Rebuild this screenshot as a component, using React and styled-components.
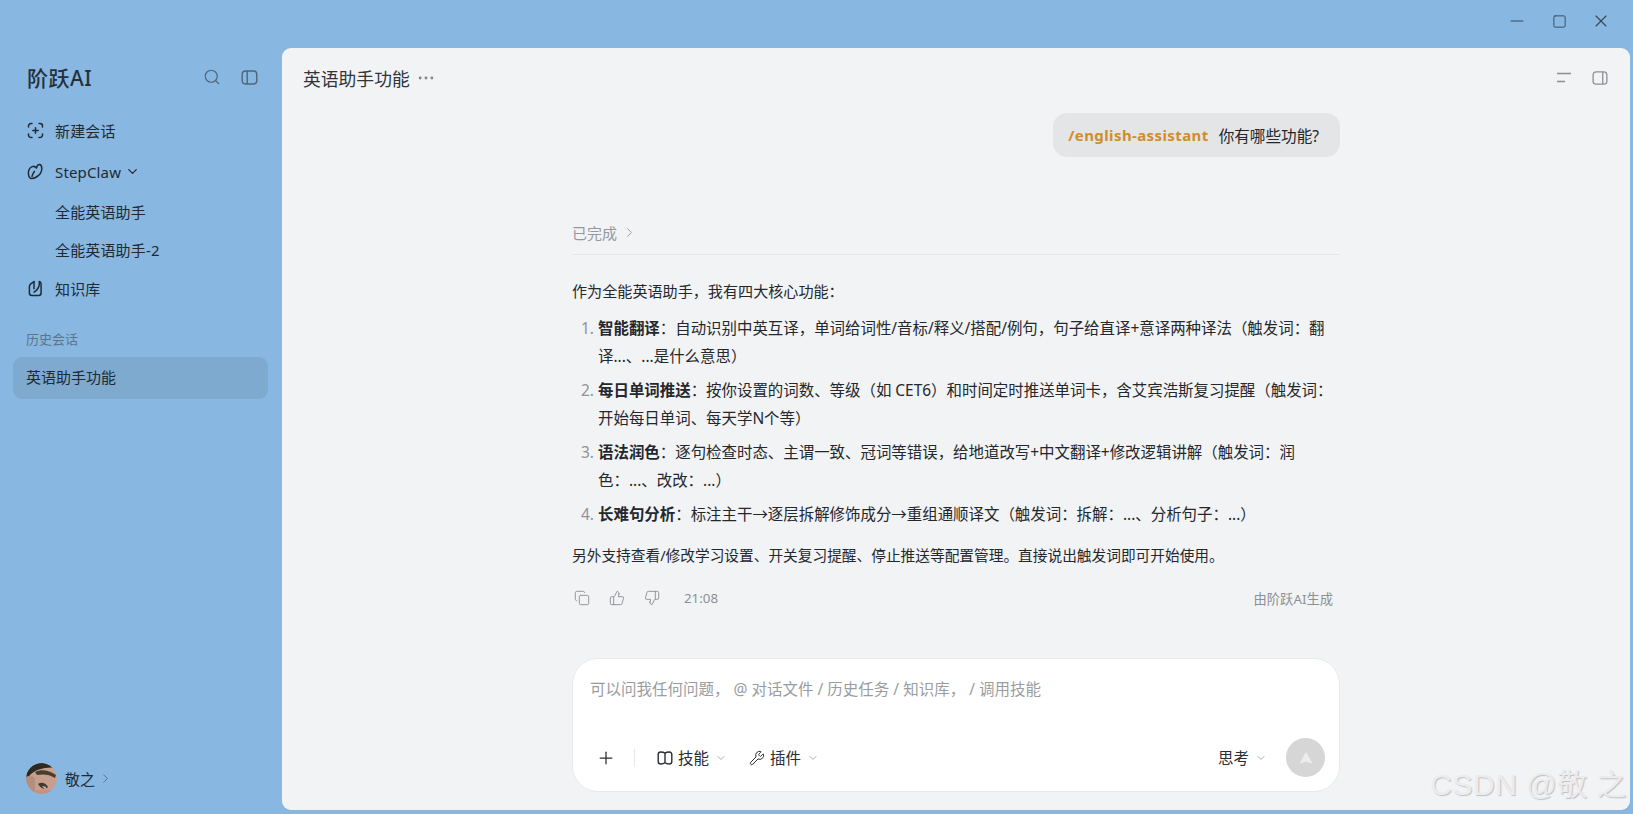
import React from "react";
import styled, { createGlobalStyle } from "styled-components";
import { Search, Plus, ChevronDown, ChevronRight, Minus, Square, X, Copy, ThumbsUp, ThumbsDown, Wrench, Ellipsis } from "lucide-react";

const GlobalStyle = createGlobalStyle`
  html, body {
    margin: 0;
    height: 100%;
    overflow: hidden;
  }
  body {
    font-family: "Noto Sans", "Noto Sans CJK SC", sans-serif;
    color: #1f2329;
  }
  * {
    box-sizing: border-box;
  }
`;

const PanelIcon = ({ right, size = 17 }) => (
  <svg width={size} height={size} viewBox="0 0 17 17" fill="none" stroke="currentColor" strokeWidth="1.4">
    <rect x="1.2" y="2" width="14.6" height="13" rx="3.4" />
    <path d={right ? "M11.4 2v13" : "M6.2 2v13"} />
  </svg>
);

const NewChatIcon = () => (
  <svg width="17" height="17" viewBox="0 0 17 17" fill="none" stroke="currentColor" strokeWidth="1.5" strokeLinecap="round">
    <path d="M1.5 5V4a2.5 2.5 0 0 1 2.5-2.5h1M12 1.5h1A2.5 2.5 0 0 1 15.5 4v1M15.5 12v1a2.5 2.5 0 0 1-2.5 2.5h-1M5 15.5H4A2.5 2.5 0 0 1 1.5 13v-1" />
    <path d="M8.5 5.8v5.4M5.8 8.5h5.4" />
  </svg>
);

const ClawIcon = () => (
  <svg width="17" height="17" viewBox="0 0 17 17" fill="none" stroke="currentColor" strokeWidth="1.5" strokeLinecap="round" strokeLinejoin="round">
    <path d="M6.8 3.2C3.8 3.6 1.4 6.2 1.4 9.6c0 2.8.8 5.4 2.4 5.8 1.6.4 3.6-.2 5.6-1.400 3-1.800 5.400-4.800 5.400-8.200 0-2.400-.8-4-2-4.200-1.400-.2-2.800 1.200-3.400 3.400-.6-.8-1.400-1.400-2.600-1.800z" />
    <path d="M7.4 8.400c-1.200 1.400-2 3-2.400 5" />
  </svg>
);

const BaseIcon = () => (
  <svg width="17" height="17" viewBox="0 0 17 17" fill="none" stroke="currentColor" strokeWidth="1.5" strokeLinecap="round" strokeLinejoin="round">
    <path d="M7 1.600 3.800 3.900c-1 .7-1.400 1.500-1.400 2.600v6.400c0 1.500 1 2.500 2.500 2.500h6.700c1.500 0 2.500-1 2.500-2.500V4.200c0-1.400-.7-2.400-1.800-2.600" />
    <path d="M7 1.600v7.200M12.400 1.800c.3 3.400-.2 7.200-5.400 10.400" />
  </svg>
);

const BookIcon = () => (
  <svg width="16" height="16" viewBox="0 0 16 16" fill="none" stroke="currentColor" strokeWidth="1.4">
    <path d="M8 3.200C6.800 2.200 5.400 2 3.600 2 2.200 2 1.200 3 1.200 4.400v7.200c0 1.400 1 2.400 2.400 2.400 1.800 0 3.200-.2 4.400-1.200 1.200 1 2.600 1.200 4.400 1.200 1.400 0 2.400-1 2.400-2.400V4.400C14.800 3 13.800 2 12.400 2 10.600 2 9.200 2.200 8 3.200z" />
    <path d="M8 3.200v9.600" />
  </svg>
);

const FoldIcon = () => (
  <svg width="16" height="16" viewBox="0 0 16 16" fill="none" stroke="currentColor" strokeWidth="1.5">
    <path d="M1 3.500h14M1 11.500h8" />
  </svg>
);

const SendIcon = () => (
  <svg width="16" height="16" viewBox="0 0 16 16" fill="#ececec" stroke="#ececec" strokeWidth="1.2" strokeLinejoin="round">
    <path d="M8 3 13.500 13 8 11 2.500 13z" />
  </svg>
);

const Avatar = () => (
  <svg width="31" height="31" viewBox="0 0 31 31">
    <defs>
      <clipPath id="avatar-clip">
        <circle cx="15.5" cy="15.5" r="15.5" />
      </clipPath>
      <filter id="avatar-blur">
        <feGaussianBlur stdDeviation="0.7" />
      </filter>
    </defs>
    <g clipPath="url(#avatar-clip)">
      <rect width="31" height="31" fill="#c6a08c" />
      <g filter="url(#avatar-blur)">
        <path d="M-1-1h33v6C22 3 9 6 4 12L-1 18z" fill="#2f2a24" />
        <path d="M9 9c6-3 14-2 21 3l-1 3c-6-4-12-4-18-3z" fill="#4a3c33" />
        <path d="M0 14c3-2 6-1 9 1v15H0z" fill="#b58f7d" />
        <path d="M12 21c3-2 7-2 10 3-3 3-7 2-10-3z" fill="#3f3733" />
        <path d="M16 23l4 1-1 2z" fill="#dcd6d0" />
        <path d="M8 27h23v5H8z" fill="#c9907e" />
      </g>
    </g>
  </svg>
);

const Window = styled.div`
  position: relative;
  display: flex;
  width: 100%;
  height: 100vh;
  background: #88b8e2;
`;

const Sidebar = styled.aside`
  flex: 0 0 282px;
  display: flex;
  flex-direction: column;
  padding-top: 48px;
`;

const Brand = styled.div`
  display: flex;
  align-items: center;
  height: 58px;
  padding: 0 24px 0 27px;
`;

const Logo = styled.div`
  flex: 1;
  font-size: 21px;
  font-weight: 500;
  letter-spacing: 0.5px;
  color: #26303a;
`;

const BrandButton = styled.span`
  display: flex;
  margin-left: 20px;
  color: #4d6578;
`;

const NavList = styled.nav`
  display: flex;
  flex-direction: column;
  margin-top: 3px;
`;

const NavItem = styled.div`
  display: flex;
  align-items: center;
  gap: 11px;
  height: ${(p) => (p.$sub ? "38px" : "41px")};
  padding-left: ${(p) => (p.$sub ? "55px" : "27px")};
  font-size: 15px;
  letter-spacing: 0.15px;
  color: #1f2a33;

  &:first-child {
    height: 42px;
  }
`;

const NavCaret = styled.span`
  display: flex;
  margin-left: -7px;
`;

const SectionLabel = styled.div`
  margin-top: 20px;
  padding-left: 26px;
  font-size: 13px;
  color: #5d7488;
`;

const HistoryItem = styled.div`
  display: flex;
  align-items: center;
  height: 42px;
  margin: 9px 14px 0 13px;
  padding: 0 0 3px 13px;
  border-radius: 9px;
  background: #7eaad0;
  font-size: 15px;
  color: #1f2a33;
`;

const UserRow = styled.div`
  display: flex;
  align-items: center;
  gap: 8px;
  margin-top: auto;
  margin-bottom: 20px;
  padding-left: 26px;
  font-size: 15px;
  color: #1f2a33;

  svg {
    border-radius: 50%;
  }
`;

const UserCaret = styled.span`
  display: flex;
  margin-left: -5px;
  color: #56718a;
`;

const Main = styled.main`
  flex: 1;
  display: flex;
  flex-direction: column;
  margin: 48px 3px 4px 0;
  border-radius: 9px;
  background: #f2f3f5;
  overflow: hidden;
`;

const Header = styled.header`
  display: flex;
  align-items: center;
  height: 60px;
  padding: 0 22px 0 21px;
`;

const Title = styled.h1`
  margin: 0;
  font-size: 17.8px;
  font-weight: 400;
  color: #30353b;
`;

const Dots = styled.span`
  display: flex;
  margin-left: 6px;
  color: #7f8388;
`;

const HeaderActions = styled.div`
  display: flex;
  align-items: center;
  gap: 20px;
  margin-left: auto;
  color: #8b8f94;
`;

const Column = styled.div`
  width: 768px;
  margin-left: 290px;
  display: flex;
  flex-direction: column;
`;

const UserBubble = styled.div`
  align-self: flex-end;
  display: flex;
  align-items: center;
  height: 44px;
  margin-top: 5px;
  padding: 0 21px 0 15px;
  border-radius: 14px;
  background: #e4e5e7;
  font-size: 15.6px;
  color: #23272c;
`;

const Command = styled.span`
  margin-right: 10px;
  font-size: 15px;
  font-weight: 700;
  letter-spacing: 0.4px;
  color: #cf8e2b;
`;

const Status = styled.div`
  display: flex;
  align-items: center;
  gap: 5px;
  height: 45px;
  margin-top: 53px;
  border-bottom: 1px solid #e6e7ea;
  font-size: 15px;
  color: #94989d;
`;

const Answer = styled.div`
  margin-top: 22px;
  font-size: 15px;
  line-height: 28px;
  color: #24282d;
`;

const Para = styled.p`
  margin: 0;
  font-size: ${(p) => (p.$tight ? "14.7px" : "15.1px")};
`;

const Steps = styled.ol`
  margin: 9px 0 13px;
  padding: 0 0 0 26px;
  font-size: 15.45px;

  li {
    margin-bottom: 6px;
    white-space: pre-line;
  }
  li::marker {
    color: #8f9398;
  }
  strong {
    font-weight: 700;
  }
`;

const MetaRow = styled.div`
  display: flex;
  align-items: center;
  height: 30px;
  margin-top: 14px;
  padding: 0 7px 0 2px;
  font-size: 13.3px;
  color: #8c9095;
`;

const MetaIcon = styled.span`
  display: flex;
  margin-right: 19px;
`;

const MetaTime = styled.span`
  margin-left: 5px;
`;

const MetaNote = styled.span`
  margin-left: auto;
`;

const Composer = styled.div`
  display: flex;
  flex-direction: column;
  height: 134px;
  margin-top: 45px;
  padding: 0 14px 0 23px;
  border: 1px solid #e9eaec;
  border-radius: 26px;
  background: #fff;
`;

const Placeholder = styled.div`
  margin: 20px 0 0 -6px;
  font-size: 15.5px;
  line-height: 20px;
  color: #999da1;
`;

const ComposerBar = styled.div`
  display: flex;
  align-items: center;
  margin-top: auto;
  margin-bottom: 14px;
  font-size: 15.5px;
  color: #2a2e33;
`;

const Divider = styled.span`
  width: 1px;
  height: 18px;
  margin: 0 22px 0 18px;
  background: #e8e8e8;
`;

const ToolButton = styled.span`
  display: flex;
  align-items: center;
  gap: 5px;
  margin-right: ${(p) => (p.$end ? "17px" : "22px")};
`;

const Caret = styled.span`
  display: flex;
  margin-left: 1px;
  color: #8d9094;
`;

const SendButton = styled.span`
  display: flex;
  align-items: center;
  justify-content: center;
  width: 39px;
  height: 39px;
  margin-left: 2px;
  border-radius: 50%;
  background: #d6d6d6;
`;

const Spacer = styled.span`
  flex: 1;
`;

const TitleBar = styled.div`
  position: absolute;
  top: 0;
  right: 0;
  display: flex;
  align-items: center;
  height: 42px;
  padding-right: 11px;
  color: #36475a;
`;

const WinButton = styled.span`
  display: flex;
  justify-content: center;
  width: 42px;
`;

const Watermark = styled.div`
  position: absolute;
  right: 6px;
  bottom: 10px;
  font-family: "Liberation Sans", "Noto Sans CJK SC", sans-serif;
  font-size: 30px;
  letter-spacing: 0.5px;
  color: #ebecee;
  text-shadow: 1px 1px 1px #bfc0c2;
`;

const steps = [
  ["智能翻译", "：自动识别中英互译，单词给词性/音标/释义/搭配/例句，句子给直译+意译两种译法（触发词：翻\n译...、...是什么意思）"],
  ["每日单词推送", "：按你设置的词数、等级（如 CET6）和时间定时推送单词卡，含艾宾浩斯复习提醒（触发词：\n开始每日单词、每天学N个等）"],
  ["语法润色", "：逐句检查时态、主谓一致、冠词等错误，给地道改写+中文翻译+修改逻辑讲解（触发词：润\n色：...、改改：...）"],
  ["长难句分析", "：标注主干→逐层拆解修饰成分→重组通顺译文（触发词：拆解：...、分析句子：...）"],
];

export default function App() {
  return (
    <Window>
      <GlobalStyle />
      <Sidebar>
        <Brand>
          <Logo>阶跃AI</Logo>
          <BrandButton>
            <Search size={18} strokeWidth={1.5} />
          </BrandButton>
          <BrandButton>
            <PanelIcon />
          </BrandButton>
        </Brand>
        <NavList>
          <NavItem>
            <NewChatIcon />
            新建会话
          </NavItem>
          <NavItem>
            <ClawIcon />
            StepClaw
            <NavCaret>
              <ChevronDown size={15} strokeWidth={2} />
            </NavCaret>
          </NavItem>
          <NavItem $sub>全能英语助手</NavItem>
          <NavItem $sub>全能英语助手-2</NavItem>
          <NavItem>
            <BaseIcon />
            知识库
          </NavItem>
        </NavList>
        <SectionLabel>历史会话</SectionLabel>
        <HistoryItem>英语助手功能</HistoryItem>
        <UserRow>
          <Avatar />
          敬之
          <UserCaret>
            <ChevronRight size={15} strokeWidth={1.5} />
          </UserCaret>
        </UserRow>
      </Sidebar>
      <Main>
        <Header>
          <Title>英语助手功能</Title>
          <Dots>
            <Ellipsis size={20} strokeWidth={1.5} />
          </Dots>
          <HeaderActions>
            <FoldIcon />
            <PanelIcon right size={16} />
          </HeaderActions>
        </Header>
        <Column>
          <UserBubble>
            <Command>/english-assistant</Command>
            你有哪些功能?
          </UserBubble>
          <Status>
            已完成
            <ChevronRight size={15} strokeWidth={1.5} />
          </Status>
          <Answer>
            <Para>作为全能英语助手，我有四大核心功能：</Para>
            <Steps>
              {steps.map(([name, text]) => (
                <li key={name}>
                  <strong>{name}</strong>
                  {text}
                </li>
              ))}
            </Steps>
            <Para $tight>另外支持查看/修改学习设置、开关复习提醒、停止推送等配置管理。直接说出触发词即可开始使用。</Para>
          </Answer>
          <MetaRow>
            <MetaIcon>
              <Copy size={16} strokeWidth={1.4} />
            </MetaIcon>
            <MetaIcon>
              <ThumbsUp size={16} strokeWidth={1.4} />
            </MetaIcon>
            <MetaIcon>
              <ThumbsDown size={16} strokeWidth={1.4} />
            </MetaIcon>
            <MetaTime>21:08</MetaTime>
            <MetaNote>由阶跃AI生成</MetaNote>
          </MetaRow>
          <Composer>
            <Placeholder>可以问我任何问题， @ 对话文件 / 历史任务 / 知识库， / 调用技能</Placeholder>
            <ComposerBar>
              <Plus size={20} strokeWidth={1.5} />
              <Divider />
              <ToolButton>
                <BookIcon />
                技能
                <Caret>
                  <ChevronDown size={12} strokeWidth={1.5} />
                </Caret>
              </ToolButton>
              <ToolButton>
                <Wrench size={16} strokeWidth={1.5} />
                插件
                <Caret>
                  <ChevronDown size={12} strokeWidth={1.5} />
                </Caret>
              </ToolButton>
              <Spacer />
              <ToolButton $end>
                思考
                <Caret>
                  <ChevronDown size={12} strokeWidth={1.5} />
                </Caret>
              </ToolButton>
              <SendButton>
                <SendIcon />
              </SendButton>
            </ComposerBar>
          </Composer>
        </Column>
      </Main>
      <TitleBar>
        <WinButton>
          <Minus size={20} strokeWidth={1.4} />
        </WinButton>
        <WinButton>
          <Square size={15} strokeWidth={1.5} />
        </WinButton>
        <WinButton>
          <X size={20} strokeWidth={1.4} />
        </WinButton>
      </TitleBar>
      <Watermark>CSDN @敬 之</Watermark>
    </Window>
  );
}
